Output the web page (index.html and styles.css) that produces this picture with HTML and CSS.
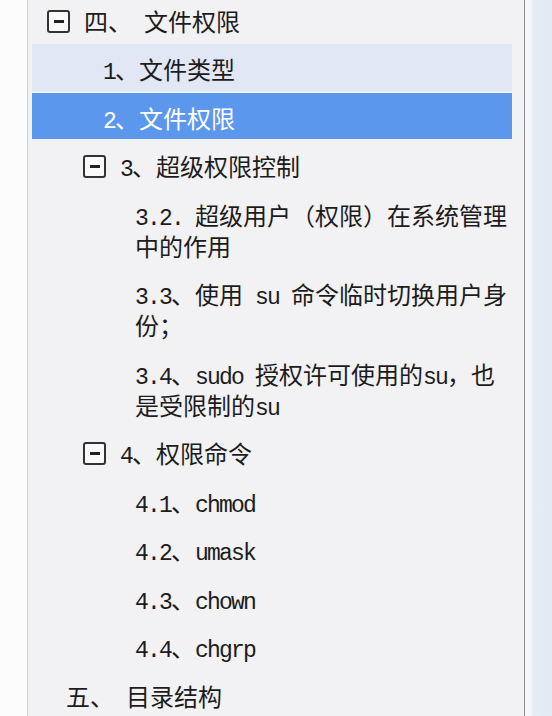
FILE: index.html
```html
<!DOCTYPE html>
<html lang="zh-CN">
<head>
<meta charset="utf-8">
<title>目录</title>
<link rel="stylesheet" href="styles.css">
</head>
<body>
<div class="frame">
  <div class="gutter"></div>
  <div class="panel">
    <ul class="tree">
      <li class="row l1 has-toggle"><span class="toggle"></span><span class="label">四、<span class="m"> </span>文件权限</span></li>
      <li class="row l2 hover"><span class="label"><span class="m">1</span>、文件类型</span></li>
      <li class="row l2 selected"><span class="label"><span class="m">2</span>、文件权限</span></li>
      <li class="row l2 has-toggle"><span class="toggle"></span><span class="label"><span class="m">3</span>、超级权限控制</span></li>
      <li class="row l3"><span class="label"><span class="m">3.2. </span>超级用户（权限）在系统管理中的作用</span></li>
      <li class="row l3"><span class="label"><span class="m">3.3</span>、使用<span class="m"> su </span>命令临时切换用户身份；</span></li>
      <li class="row l3"><span class="label"><span class="m">3.4</span>、<span class="m">sudo </span>授权许可使用的<span class="m">su</span>，也是受限制的<span class="m">su</span></span></li>
      <li class="row l2 has-toggle"><span class="toggle"></span><span class="label"><span class="m">4</span>、权限命令</span></li>
      <li class="row l3"><span class="label"><span class="m">4.1</span>、<span class="m">chmod</span></span></li>
      <li class="row l3"><span class="label"><span class="m">4.2</span>、<span class="m">umask</span></span></li>
      <li class="row l3"><span class="label"><span class="m">4.3</span>、<span class="m">chown</span></span></li>
      <li class="row l3"><span class="label"><span class="m">4.4</span>、<span class="m">chgrp</span></span></li>
      <li class="row l1"><span class="label">五、<span class="m"> </span>目录结构</span></li>
    </ul>
  </div>
  <div class="sidebar"></div>
</div>
</body>
</html>
```
FILE: styles.css
```css
html, body {
  margin: 0;
  padding: 0;
  background: #f2f1f4;
}

.frame {
  display: flex;
  width: 552px;
  height: 716px;
  overflow: hidden;
}

.gutter {
  width: 27px;
  flex: none;
  background: #fcfcfd;
  border-right: 1px solid #cfcfd3;
}

.panel {
  flex: 1;
  background: #f2f1f4;
  border-right: 1px solid #8c8c8e;
  overflow: hidden;
}

.sidebar {
  width: 27px;
  flex: none;
  background: linear-gradient(to right, #f5f7fa 0, #f5f7fa 5px, #e6ecf4 9px, #e4eaf3 100%);
}

.tree {
  list-style: none;
  margin: -4.25px 0 0 0;
  padding: 0;
  font-family: "Noto Sans CJK SC", "Noto Sans", sans-serif;
  font-size: 24px;
  line-height: 31px;
  color: #1c1c1c;
}

.row {
  display: flex;
  align-items: flex-start;
  margin: 0 12px 0 4px;
  padding: 8.75px 0 6.75px 0;
  border-bottom: 2px solid transparent;
  background-clip: padding-box;
}

.row.hover {
  background-color: #e1e7f5;
}

.row.selected {
  background-color: #5c97ee;
  color: #ffffff;
}

.label {
  display: block;
  flex: 1;
  min-width: 0;
  height: auto;
}

.m {
  font-family: "Liberation Mono", "DejaVu Sans Mono", monospace;
  font-size: 23px;
  letter-spacing: -1.8px;
  line-height: 16px;
  white-space: pre;
}

.toggle {
  flex: none;
  position: relative;
  box-sizing: border-box;
  width: 23px;
  height: 23px;
  margin-top: 5px;
  border: 2px solid #333333;
  border-radius: 3px;
  background: #fafafa;
}

.toggle::after {
  content: "";
  position: absolute;
  left: 4.5px;
  top: 8px;
  width: 10px;
  height: 3px;
  background: #222222;
}

.l1.has-toggle { padding-left: 15px; }
.l1.has-toggle .toggle { margin-right: 14px; }
.l1 { padding-left: 34px; }

.l2 { padding-left: 71px; }
.l2.has-toggle { padding-left: 51px; }
.l2.has-toggle .toggle { margin-right: 14px; }

.l3 { padding-left: 103px; }
```
